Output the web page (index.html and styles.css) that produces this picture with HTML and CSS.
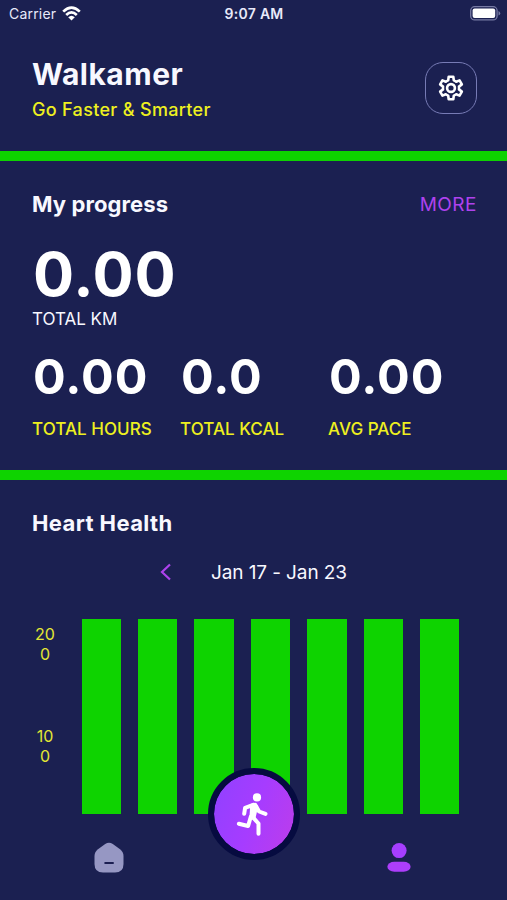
FILE: index.html
```html
<!DOCTYPE html>
<html lang="en">
<head>
<meta charset="utf-8">
<title>Walkamer</title>
<link rel="stylesheet" href="styles.css">
</head>
<body>
<div class="app">
  <div class="status">
    <div class="carrier"><span>Carrier</span>
      <svg width="19" height="15" viewBox="0 0 19 15"><g fill="none" stroke="#fff" stroke-width="2.7"><path d="M1.2 5.6Q9.5 -2.4 17.8 5.6"/><path d="M4.2 8.9Q9.5 3.9 14.8 8.9"/></g><path d="M6.2 11.2Q9.5 8.2 12.8 11.2L9.5 14.6Z" fill="#fff"/></svg>
    </div>
    <div class="time">9:07 AM</div>
    <div class="battery">
      <svg width="31" height="15" viewBox="0 0 31 15"><rect x=".7" y=".7" width="26.4" height="13.2" rx="4" fill="none" stroke="#777aa4" stroke-width="1.3"/><rect x="2.6" y="2.6" width="22.6" height="9.4" rx="2" fill="#fff"/><path d="M28.5 5v4.6q1.7-.7 1.7-2.3t-1.7-2.3z" fill="#777aa4"/></svg>
    </div>
  </div>
  <header class="header">
    <div>
      <h1>Walkamer</h1>
      <p class="tagline"><span>Go Faster &amp; Smarter</span></p>
    </div>
    <button class="settings" aria-label="Settings">
      <svg width="28" height="28" viewBox="-14 -14 28 28" fill="none" stroke="#fff" stroke-width="2.6" stroke-linejoin="round"><path d="M-2.3-11.2H2.3L2.8-7.6Q4-7.1 5.18-6.22L8.55-7.59 10.85-3.61 7.98-1.38Q8.2 0 7.98 1.38L10.85 3.61 8.55 7.59 5.18 6.22Q4 7.1 2.8 7.6L2.3 11.2H-2.3L-2.8 7.6Q-4 7.1-5.18 6.22L-8.55 7.59-10.85 3.61-7.98 1.38Q-8.2 0-7.98-1.38L-10.85-3.61-8.55-7.59-5.18-6.22Q-4-7.1-2.8-7.6Z"/><circle r="3.9"/></svg>
    </button>
  </header>
  <section class="progress">
    <div class="section-head">
      <h2 class="t-progress">My progress</h2>
      <span class="more">MORE</span>
    </div>
    <div class="total"><span>0.00</span></div>
    <div class="total-label"><span>TOTAL KM</span></div>
    <div class="stats">
      <div><div class="value">0.00</div><div class="label">TOTAL HOURS</div></div>
      <div><div class="value">0.0</div><div class="label">TOTAL KCAL</div></div>
      <div><div class="value">0.00</div><div class="label">AVG PACE</div></div>
    </div>
  </section>
  <section class="heart">
    <h2 class="t-heart">Heart Health</h2>
    <div class="range">
      <svg width="12" height="18" viewBox="0 0 12 18"><path d="M10 1.5L2 9l8 7.5" fill="none" stroke="#ae42ee" stroke-width="2.2"/></svg>
      <span>Jan 17 - Jan 23</span>
    </div>
    <div class="chart">
      <div class="axis"><div>20<br>0</div><div>10<br>0</div></div>
      <div class="bars"><i></i><i></i><i></i><i></i><i></i><i></i><i></i></div>
    </div>
  </section>
  <nav class="nav">
    <svg class="home" width="30" height="31" viewBox="0 0 30 31"><path d="M11.2 1.9Q15 -.5 18.8 1.9L26 7.3Q29.5 10 29.5 14V22Q29.5 30.5 21 30.5H9Q.5 30.5 .5 22V14Q.5 10 4 7.3Z" fill="#9697c3"/><path d="M11.3 21h7.6" stroke="#1b1e51" stroke-width="2.2" stroke-linecap="round"/></svg>
    <svg class="user" width="24" height="29" viewBox="0 0 24 29"><circle cx="12.1" cy="7.6" r="7.5" fill="#a63eff"/><rect x=".4" y="18.7" width="23.2" height="10" rx="7" ry="5" fill="#ad3efb"/></svg>
  </nav>
  <button class="run" aria-label="Start run">
    <svg width="40" height="48" viewBox="33.7 30.3 40 48"><circle cx="56.7" cy="37.7" r="4.1" fill="#fff"/><g fill="none" stroke="#fff" stroke-width="4" stroke-linecap="round" stroke-linejoin="round"><path d="M53.5 45L44.8 48.2 43.9 54"/><path d="M55 45.2L58.8 51.8 65.2 54.2"/><path d="M50.5 57L47.8 66.3 38.5 64"/><path d="M52.5 57.5L58.2 63.8V74"/></g><path d="M50 44.5Q55 42 58 46.2L55.5 57 55 60 49 59.5Z" fill="#fff"/></svg>
  </button>
</div>
</body>
</html>
```
FILE: styles.css
```css
* { box-sizing: border-box; margin: 0; padding: 0; }
body { background: #1b2051; font-family: Inter, sans-serif; color: #f8f8ff; }
button { background: none; border: 0; display: grid; place-items: center; }
svg { display: block; }
.app { position: relative; width: 507px; height: 900px; overflow: hidden; background: #1b2051; }
.status { display: grid; grid-template-columns: 1fr auto 1fr; height: 27px; padding: 0 6px 0 9px; align-items: center; font-size: 14px; color: #e8e9fa; }
.carrier { display: flex; align-items: center; gap: 6px; letter-spacing: .2px; }
.carrier svg { margin-top: -1px; }
.time { font-weight: 600; letter-spacing: .3px; margin-right: 2px; }
.battery { display: flex; justify-content: flex-end; }
.header { display: flex; justify-content: space-between; height: 124px; padding: 29px 30px 0 32px; }
h1 { font-size: 30px; line-height: 36px; font-weight: 700; letter-spacing: .5px; }
.tagline { font-size: 18px; line-height: 24px; margin-top: 6px; font-weight: 500; letter-spacing: .32px; color: #eef01f; white-space: nowrap; }
.settings { width: 52px; height: 52px; margin-top: 6px; border: 1px solid #777bb5; border-radius: 18px; }
.progress { height: 329px; border-top: 10px solid #0ed300; border-bottom: 10px solid #0ed300; padding: 28px 31px 0 32px; }
.section-head { display: flex; justify-content: space-between; line-height: 30px; }
h2 { font-size: 22px; line-height: 30px; font-weight: 700; letter-spacing: .4px; }
.t-progress { letter-spacing: .1px; }
.more { font-size: 19px; letter-spacing: .5px; margin-right: -1px; padding-top: 1px; color: #ae42ee; }
.total { font-size: 61px; line-height: 70px; margin-top: 19px; height: 69px; padding-left: 1px; font-weight: 700; letter-spacing: .8px; color: #fff; }
.total-label { font-size: 17px; line-height: 22px; }
.stats { display: grid; grid-template-columns: 148px 148px 1fr; margin-top: 17px; }
.value { font-size: 48.5px; line-height: 60px; padding-left: 1px; font-weight: 700; letter-spacing: 1px; color: #fff; }
.label { font-size: 17px; line-height: 22px; margin-top: 11px; font-weight: 500; letter-spacing: .05px; color: #eef01f; white-space: nowrap; }
.heart { padding: 28px 0 0 32px; }
.range { display: flex; align-items: center; height: 30px; margin-top: 19px; padding-left: 128px; gap: 39px; font-size: 19px; letter-spacing: -.1px; }
.chart { display: flex; margin-top: 32px; height: 195px; }
.axis { width: 26px; font-size: 16px; line-height: 19.5px; text-align: center; color: #e4e733; padding-top: 6px; display: flex; flex-direction: column; gap: 63px; }
.bars { display: flex; gap: 17px; margin-left: 23.6px; }
.bars i { width: 39.4px; background: #0ed300; }
.nav { display: flex; align-items: flex-start; justify-content: space-between; padding: 28px 96px 0 94px; }
.user { margin-top: 1px; }
.run { position: absolute; left: 208px; top: 768px; width: 92px; height: 92px; border-radius: 50%; border: 6px solid #060b40; background: linear-gradient(110deg, #9041ff, #a63cff 50%, #bd3dea) padding-box, #060b40; }
```
